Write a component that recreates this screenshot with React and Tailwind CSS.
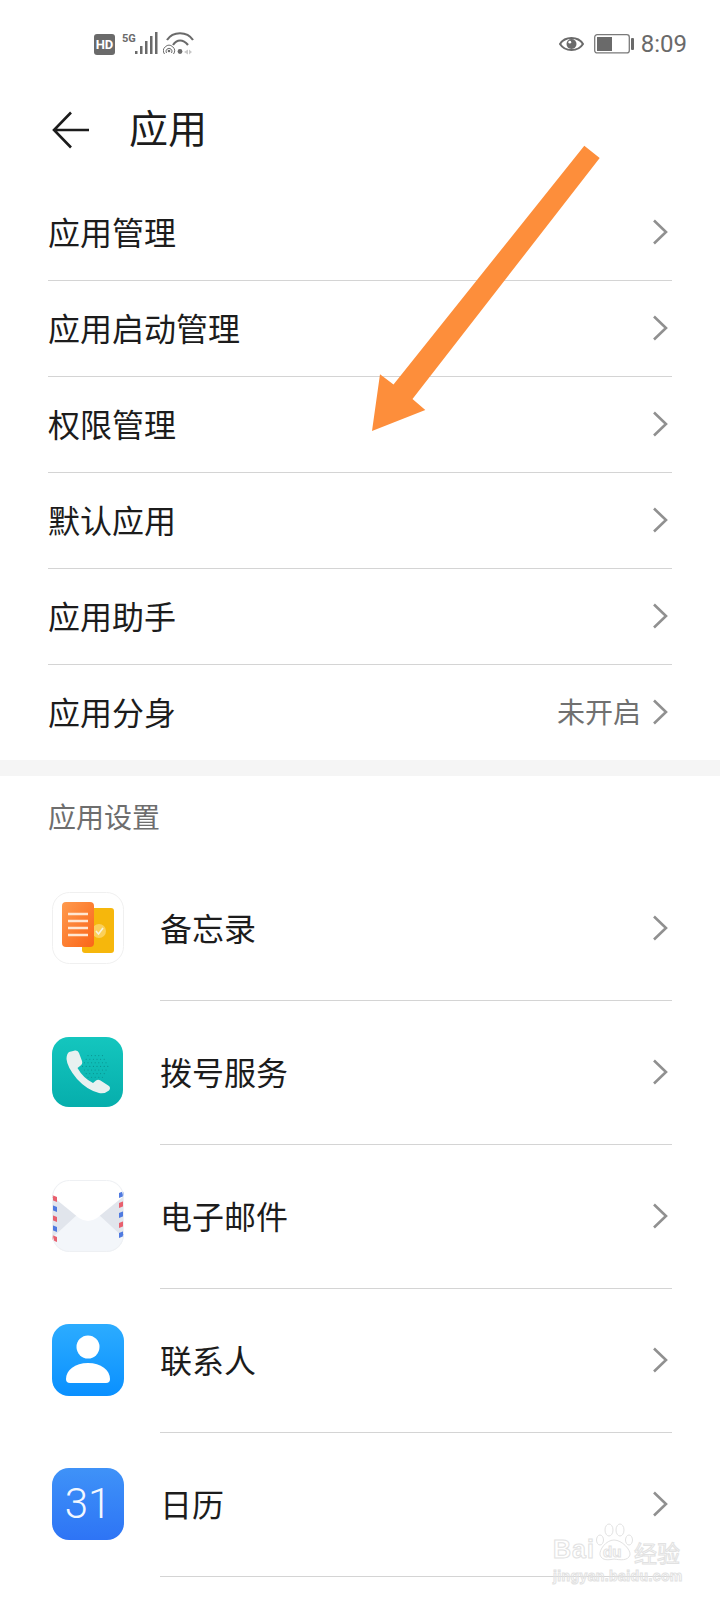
const CJK = "font-['Noto_Sans_CJK_SC','Noto_Sans',sans-serif]";

function Chevron() {
  return (
    <svg width="18" height="28" viewBox="0 0 18 28" fill="none" className="shrink-0">
      <path d="M3 2.5 L15 14 L3 25.5" stroke="#909090" strokeWidth="2.6" />
    </svg>
  );
}

function Row({ label, value, last }) {
  return (
    <div className={`flex items-center justify-between pb-[2px] ${last ? "h-[95px]" : "h-24 border-b border-[#d4d4d4]"}`}>
      <span className="-mt-[2px] text-[32px] leading-none text-[#1c1c1c]">{label}</span>
      <div className="mr-[3px] flex items-center gap-[10px]">
        {value && <span className="-mt-[2px] text-[28px] leading-none text-[#707070]">{value}</span>}
        <Chevron />
      </div>
    </div>
  );
}

function MemoIcon() {
  return (
    <svg width="72" height="72" viewBox="0 0 72 72">
      <defs>
        <linearGradient id="memoO" x1="0" y1="0" x2="1" y2="1">
          <stop offset="0" stopColor="#ff9a4d" />
          <stop offset="1" stopColor="#fa6518" />
        </linearGradient>
      </defs>
      <rect x="0.5" y="0.5" width="71" height="71" rx="17" fill="#fff" stroke="#f0f0f0" />
      <rect x="30" y="16" width="32" height="45" rx="3" fill="#f6b70c" />
      <circle cx="47" cy="39" r="7" fill="#fbd05a" />
      <path d="M44 39 L46.5 42 L51 36" stroke="#f6f2e0" strokeWidth="1.6" fill="none" />
      <rect x="10" y="10" width="32" height="45" rx="4" fill="url(#memoO)" />
      {[22, 29, 36, 43].map((y) => (
        <rect key={y} x="16" y={y - 1.25} width="20" height="2.5" fill="#ffe7d2" />
      ))}
    </svg>
  );
}

function PhoneIcon() {
  const dots = [];
  for (let r = 0; r < 9; r++) {
    for (let c = 0; c < 10; c++) {
      const x = 27 + c * 3.6 + (r % 2) * 1.8;
      const y = 16 + r * 3.6;
      if (Math.hypot(x - 43, y - 30) < 13.5) dots.push([x, y]);
    }
  }
  return (
    <svg width="72" height="72" viewBox="0 0 72 72">
      <defs>
        <linearGradient id="phoneG" x1="0" y1="0" x2="0" y2="1">
          <stop offset="0" stopColor="#14c6be" />
          <stop offset="1" stopColor="#06aeac" />
        </linearGradient>
      </defs>
      <rect x="0" y="1" width="71" height="70" rx="17" fill="url(#phoneG)" />
      {dots.map(([x, y], i) => (
        <circle key={i} cx={x} cy={y} r="0.55" fill="#0a8f8c" />
      ))}
      <path
        d="M17 16 L23 14.5 Q26 14 27 17 L30 25 Q31 28 28 30 L25.5 32 Q31 42 41 47 L44 44.5 Q46 43 48.5 44.5 L57 50 Q59 52 57 54.5 Q53 58 47 57 Q35 54 25 43 Q15 31 14.5 23 Q14.5 18 17 16Z"
        fill="#e8f1f0"
      />
    </svg>
  );
}

function MailIcon() {
  const ys = [15, 25, 35, 45, 55];
  return (
    <svg width="72" height="72" viewBox="0 0 72 72">
      <defs>
        <clipPath id="mailC">
          <rect x="0" y="0" width="72" height="72" rx="17" />
        </clipPath>
      </defs>
      <g clipPath="url(#mailC)">
        <rect width="72" height="72" fill="#f3f6fa" />
        <path d="M0 14 L26 34 L0 58Z" fill="#e1e5ec" />
        <path d="M72 14 L46 34 L72 58Z" fill="#e1e5ec" />
        <path d="M0 0 H72 V16 L45 38 Q36 44 27 38 L0 16Z" fill="#ffffff" />
        {ys.map((y, i) => (
          <g key={y}>
            <path d={`M0 ${y} L5 ${y + 2} V${y + 7} L0 ${y + 5}Z`} fill={i % 2 ? "#4f7ae0" : "#e8606e"} />
            <path d={`M72 ${y - 4} L67 ${y - 2} V${y + 3} L72 ${y + 1}Z`} fill={i % 2 ? "#e8606e" : "#4f7ae0"} />
          </g>
        ))}
      </g>
      <rect x="0.5" y="0.5" width="71" height="71" rx="17" fill="none" stroke="#eef0f3" />
    </svg>
  );
}

function ContactIcon() {
  return (
    <svg width="72" height="72" viewBox="0 0 72 72">
      <defs>
        <linearGradient id="contactG" x1="0" y1="0" x2="0" y2="1">
          <stop offset="0" stopColor="#2cacff" />
          <stop offset="1" stopColor="#0a90ff" />
        </linearGradient>
      </defs>
      <rect width="72" height="72" rx="17" fill="url(#contactG)" />
      <circle cx="36" cy="23" r="11.5" fill="#fff" />
      <path d="M14 55 C14 46 23 39 36 39 C49 39 58 46 58 55 Q58 59 54 59 H18 Q14 59 14 55Z" fill="#fff" />
    </svg>
  );
}

function CalendarIcon() {
  return (
    <div className="flex h-[72px] w-[72px] items-center justify-center rounded-[17px] bg-gradient-to-b from-[#3f92f8] to-[#2e74f5]">
      <span className="font-['Roboto',sans-serif] text-[42px] font-light leading-none text-[#f2f7ff]">31</span>
    </div>
  );
}

function AppRow({ icon, label }) {
  return (
    <div className="flex h-36 items-center pl-[52px] pr-12">
      <div className="-mt-[2px] w-[108px] shrink-0">{icon}</div>
      <div className="flex h-36 flex-1 items-center justify-between border-b border-[#d4d4d4] pb-[2px]">
        <span className="-mt-[2px] text-[32px] leading-none text-[#1c1c1c]">{label}</span>
        <div className="mr-[3px]"><Chevron /></div>
      </div>
    </div>
  );
}

function StatusBar() {
  return (
    <div className="flex h-[86px] items-center justify-between pl-[94px] pr-[33px] pt-[2px] text-[#6a6a6a]">
      <div className="flex items-center">
        <span className="flex h-[21px] w-[21px] items-center justify-center rounded-[3px] bg-[#6a6a6a] font-['Roboto',sans-serif] text-[13px] font-bold leading-none text-white">HD</span>
        <span className="ml-[7px] -mt-[12px] w-[13px] font-['Roboto',sans-serif] text-[11px] font-bold leading-none">5G</span>
        <svg width="24" height="24" viewBox="0 0 24 24" fill="#6a6a6a">
          <rect x="0" y="19" width="2.5" height="3" />
          <rect x="5" y="14" width="2.5" height="8" />
          <rect x="10" y="9" width="2.5" height="13" />
          <rect x="15" y="4" width="2.5" height="18" />
          <rect x="20" y="0" width="2.5" height="22" />
        </svg>
        <svg width="32" height="24" viewBox="0 0 32 24" className="ml-[4px]" fill="none">
          <path d="M4 8 C10 -1 24 -1 30 8" stroke="#6a6a6a" strokeWidth="2.2" />
          <path d="M10 13 C14 7 20 7 25 13" stroke="#6a6a6a" strokeWidth="2.2" />
          <circle cx="17" cy="19.5" r="2.4" fill="#6a6a6a" />
          <circle cx="6" cy="19" r="1.3" fill="#6a6a6a" />
          <path d="M1.5 22 A5.5 5.5 0 1 1 10.5 22" stroke="#6a6a6a" strokeWidth="1" />
          <path d="M3.5 21 A3 3 0 1 1 8.5 21" stroke="#6a6a6a" strokeWidth="1" />
          <path d="M21 20 L25 17.5 V22.5Z M26 17.5 L29 20 L26 22.5Z" fill="#c8c8c8" />
        </svg>
      </div>
      <div className="flex items-center">
        <svg width="25" height="18" viewBox="0 0 25 18" fill="none">
          <path d="M1 9 C6 1 19 1 24 9 C19 17 6 17 1 9Z" stroke="#6a6a6a" strokeWidth="2" />
          <circle cx="12.5" cy="9" r="5" fill="#6a6a6a" />
          <circle cx="10.8" cy="7.2" r="1.4" fill="#fff" />
        </svg>
        <svg width="41" height="20" viewBox="0 0 41 20" className="ml-[10px]" fill="none">
          <rect x="0.7" y="0.7" width="34.6" height="18.2" rx="2.5" stroke="#7a7a7a" strokeWidth="1.3" />
          <rect x="3" y="3" width="15" height="14" fill="#6a6a6a" />
          <rect x="37" y="4" width="3" height="12" rx="1" fill="#6a6a6a" />
        </svg>
        <span className="ml-[6px] font-['Roboto',sans-serif] text-[24px] leading-none">8:09</span>
      </div>
    </div>
  );
}

function Watermark() {
  const stroke = "[-webkit-text-stroke:1px_#e2e2e2]";
  return (
    <div className="absolute left-[553px] top-[1522px] h-[62px] w-[130px] text-transparent">
      <span className={`absolute left-0 top-[15px] font-['Liberation_Sans',sans-serif] text-[25px] font-bold leading-none tracking-[1px] ${stroke}`}>Bai</span>
      <svg width="40" height="40" viewBox="0 0 40 40" className="absolute left-[42px] top-0" fill="#fff" stroke="#e2e2e2" strokeWidth="1">
        <ellipse cx="5" cy="18" rx="3.5" ry="5" />
        <ellipse cx="14" cy="8" rx="4" ry="6" />
        <ellipse cx="25" cy="8" rx="4" ry="6" />
        <ellipse cx="34" cy="18" rx="3.5" ry="5" />
        <path d="M19 18 C11 18 4 28 5 33 C7 39 14 38 19 37 C25 38 33 39 35 33 C36 28 27 18 19 18Z" />
      </svg>
      <span className={`absolute left-[50px] top-[22px] font-['Liberation_Sans',sans-serif] text-[15px] font-bold leading-none ${stroke}`}>du</span>
      <span className={`absolute left-[81px] top-[19px] text-[23px] leading-none ${stroke}`}>经验</span>
      <span className={`absolute left-0 top-[47px] whitespace-nowrap font-['Liberation_Sans',sans-serif] text-[14px] font-bold leading-none tracking-[0.4px] ${stroke}`}>jingyan.baidu.com</span>
    </div>
  );
}

function OrangeArrow() {
  return (
    <svg width="720" height="1600" viewBox="0 0 720 1600" className="pointer-events-none absolute left-0 top-0">
      <polygon
        points="584.3,145.7 599.7,158 412.5,399 425.3,410 372,431 380,374.3 393.5,384.5"
        fill="#fd8e3b"
      />
    </svg>
  );
}

export default function App() {
  const top = ["应用管理", "应用启动管理", "权限管理", "默认应用", "应用助手"];
  const apps = [
    [<MemoIcon />, "备忘录"],
    [<PhoneIcon />, "拨号服务"],
    [<MailIcon />, "电子邮件"],
    [<ContactIcon />, "联系人"],
    [<CalendarIcon />, "日历"],
  ];
  return (
    <div className={`relative h-[1600px] w-[720px] overflow-hidden bg-white ${CJK}`}>
      <StatusBar />
      <div className="flex h-[99px] items-center pb-3 pl-[52px]">
        <svg width="38" height="38" viewBox="0 0 38 38" fill="none">
          <path d="M19 1.5 L2 19 L19 36.5 M2 19 H37" stroke="#1c1c1c" strokeWidth="2.6" />
        </svg>
        <span className="-mt-[6px] ml-[39px] text-[39px] leading-none text-[#1c1c1c]">应用</span>
      </div>
      <div className="px-12">
        {top.map((t) => (
          <Row key={t} label={t} />
        ))}
        <Row label="应用分身" value="未开启" last />
      </div>
      <div className="h-4 bg-[#f5f5f5]" />
      <div className="flex h-[81px] items-start pl-12 pt-[26px] text-[28px] leading-none text-[#6e6e6e]">应用设置</div>
      {apps.map(([icon, label]) => (
        <AppRow key={label} icon={icon} label={label} />
      ))}
      <OrangeArrow />
      <Watermark />
    </div>
  );
}
